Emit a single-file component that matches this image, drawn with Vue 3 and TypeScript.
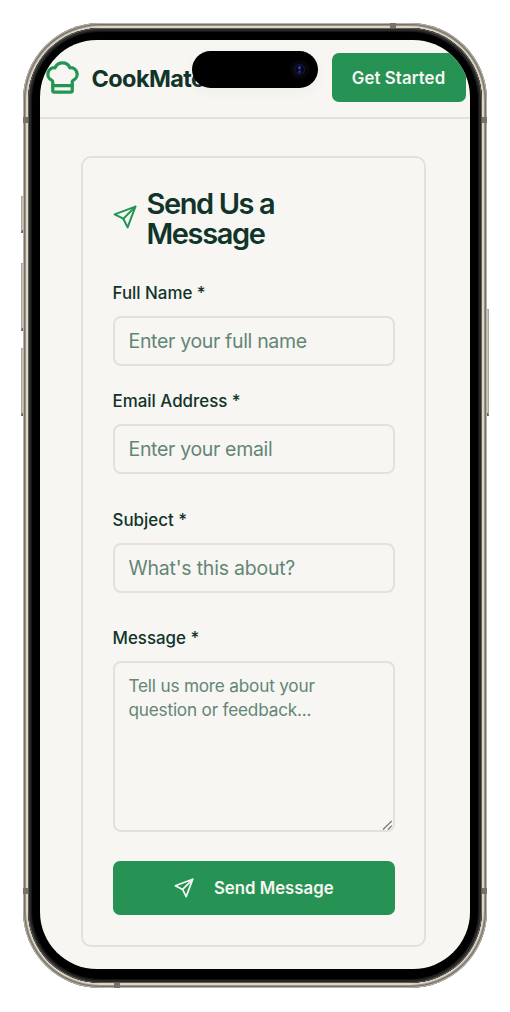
<script setup lang="ts">
import { ref } from 'vue'

interface Field {
  id: string
  label: string
  placeholder: string
  type: string
}

const fields: Field[] = [
  { id: 'name', label: 'Full Name *', placeholder: 'Enter your full name', type: 'text' },
  { id: 'email', label: 'Email Address *', placeholder: 'Enter your email', type: 'email' },
  { id: 'subject', label: 'Subject *', placeholder: "What's this about?", type: 'text' },
]

const values = ref<Record<string, string>>({ name: '', email: '', subject: '' })
const message = ref('')
</script>

<template>
  <main class="stage">
    <div class="phone">
      <i class="side-key action"></i>
      <i class="side-key volume-up"></i>
      <i class="side-key volume-down"></i>
      <i class="side-key power"></i>
      <div class="frame">
        <i class="band left top"></i>
        <i class="band right top"></i>
        <i class="band left bottom"></i>
        <i class="band right bottom"></i>
        <i class="band cap-top"></i>
        <i class="band cap-bottom"></i>
        <div class="bezel">
          <div class="screen">
            <header class="navbar">
              <svg class="logo" viewBox="0 0 24 24">
                <path d="M17 21a1 1 0 0 0 1-1v-5.35c0-.457.316-.844.727-1.041a4 4 0 0 0-2.134-7.589 5 5 0 0 0-9.186 0 4 4 0 0 0-2.134 7.588c.411.198.727.585.727 1.041V20a1 1 0 0 0 1 1Z" />
                <path d="M6 17h12" />
              </svg>
              <span class="brand">CookMate</span>
              <button class="cta" type="button">Get Started</button>
            </header>
            <form class="card" @submit.prevent>
              <h1 class="title">
                <svg class="plane" viewBox="0 0 24 24">
                  <path d="M22.4 1.6 14.6 22.4 10.3 13.7 1.6 9.4Z" />
                  <path d="M22.4 1.6 10.3 13.7" />
                </svg>
                <span>Send Us a<br />Message</span>
              </h1>
              <div v-for="field in fields" :key="field.id" class="field" :class="field.id">
                <label :for="field.id">{{ field.label }}</label>
                <input :id="field.id" v-model="values[field.id]" :type="field.type" :placeholder="field.placeholder" />
              </div>
              <div class="field message">
                <label for="message">Message *</label>
                <div class="area">
                  <textarea id="message" v-model="message" placeholder="Tell us more about your question or feedback..."></textarea>
                  <svg class="grip" viewBox="0 0 12 12"><path d="M1 10.5 9.8 2M6 10.5l3.8-3.8" /></svg>
                </div>
              </div>
              <button class="submit" type="submit">
                <svg class="plane" viewBox="0 0 24 24">
                  <path d="M22.4 1.6 14.6 22.4 10.3 13.7 1.6 9.4Z" />
                  <path d="M22.4 1.6 10.3 13.7" />
                </svg>
                <span>Send Message</span>
              </button>
            </form>
          </div>
        </div>
      </div>
      <div class="island"><i class="lens"></i></div>
    </div>
  </main>
</template>

<style>
html,
body {
  background: #fff;
}
</style>

<style scoped>
* {
  box-sizing: border-box;
}
.stage {
  width: 510px;
  height: 1012px;
  padding: 23px 23px 0;
  overflow: hidden;
  font-family: Inter, "Liberation Sans", sans-serif;
  color: #10342a;
}
.phone {
  position: relative;
  width: 464px;
  height: 965px;
}
.frame {
  position: relative;
  height: 100%;
  padding: 5px;
  border-radius: 77px;
  background: #ddd5c7;
  box-shadow: inset 0 0 0 1px #b5b1a9, inset 0 0 0 2px #777268, inset 0 0 0 3px #999388;
}
.bezel {
  position: relative;
  height: 100%;
  padding: 12px;
  border-radius: 72px;
  background: #000;
  box-shadow: inset 0 0 0 1px #625e56, inset 0 0 0 3px #282828, inset 0 0 0 4px #151515;
}
.screen {
  height: 929px;
  width: 430px;
  overflow: hidden;
  border-radius: 57px;
  background: #f7f6f2;
}
.band {
  position: absolute;
  width: 6px;
  height: 6px;
  background: #777167;
}
.band.left { left: 0; }
.band.right { right: 0; }
.band.top { top: 94px; }
.band.bottom { bottom: 94px; }
.cap-top { top: 0; right: 91px; }
.cap-bottom { bottom: 0; left: 91px; }
.side-key {
  position: absolute;
  width: 4px;
  border: 1px solid #aaa69c;
  border-bottom: 3px solid #68645c;
  background: #cbc6b8;
}
.action { left: -2px; top: 173px; height: 37px; }
.volume-up { left: -2px; top: 240px; height: 68px; }
.volume-down { left: -2px; top: 325px; height: 68px; }
.power { right: -2px; top: 286px; height: 107px; }

.island {
  position: absolute;
  left: 169px;
  top: 28px;
  width: 126px;
  height: 37px;
  border-radius: 19px;
  background: #000;
  box-shadow: 0 4px 14px rgba(25, 60, 45, 0.04);
}
.lens {
  position: absolute;
  right: 13px;
  top: 13px;
  width: 11px;
  height: 11px;
  border-radius: 50%;
  border: 1px solid #1b1b50;
  background: radial-gradient(circle at 50% 30%, #3840a0 0 1px, transparent 2px),
    radial-gradient(circle at 50% 75%, #252b78 0 1px, #08081d 2px);
  box-shadow: 0 0 0 4px #08060a;
}

.navbar {
  display: flex;
  align-items: center;
  height: 78.5px;
  padding: 0 4.5px 2px 2.5px;
  border-bottom: 2px solid #e5e0d8;
}
.logo {
  width: 39px;
  height: 39px;
  fill: none;
  stroke: #239552;
  stroke-width: 2;
  stroke-linecap: round;
  stroke-linejoin: round;
}
.brand {
  margin: 2px 0 0 10px;
  font-size: 23.5px;
  font-weight: 700;
  letter-spacing: -0.6px;
}
.cta {
  width: 134px;
  height: 49px;
  margin-left: auto;
  padding: 1px 0 0;
  border: 0;
  border-radius: 7px;
  background: #269355;
  color: #f7f6f2;
  font: 600 16.8px Inter, "Liberation Sans", sans-serif;
  letter-spacing: 0.1px;
}

.card {
  display: flex;
  flex-direction: column;
  width: 345px;
  height: 791px;
  margin: 37.5px 0 0 41px;
  padding: 31px 29.5px 0;
  border: 2px solid #e5e1d8;
  border-radius: 10px;
}
.title {
  display: flex;
  align-items: center;
  gap: 10px;
  height: 60px;
  margin: 0;
  font-size: 29px;
  line-height: 30px;
  font-weight: 600;
  letter-spacing: -1.4px;
}
.plane {
  flex: none;
  width: 24px;
  height: 24px;
  fill: none;
  stroke: #239552;
  stroke-width: 2;
  stroke-linecap: round;
  stroke-linejoin: round;
}
.title .plane {
  margin-top: -4px;
}
.field {
  display: flex;
  flex-direction: column;
}
.field label {
  height: 20px;
  margin-bottom: 13px;
  font-size: 16.9px;
  line-height: 20px;
  font-weight: 550;
}
.name { margin-top: 33.5px; }
.email { margin-top: 25.5px; }
.subject, .field.message { margin-top: 35.5px; }
input,
textarea {
  display: block;
  width: 282.5px;
  margin: 0;
  border: 2px solid #e6e1d8;
  border-radius: 8px;
  outline: none;
  background: transparent;
  color: #10342a;
  font-family: Inter, "Liberation Sans", sans-serif;
}
input {
  height: 50px;
  padding: 0 14px;
  font-size: 19.5px;
  letter-spacing: -0.33px;
}
.subject input {
  letter-spacing: -0.22px;
}
textarea {
  height: 170.5px;
  padding: 10.5px 14px;
  font-size: 17.2px;
  line-height: 24px;
  letter-spacing: -0.2px;
  resize: none;
}
input::placeholder,
textarea::placeholder {
  color: #628676;
  opacity: 1;
}
.area {
  position: relative;
}
.grip {
  position: absolute;
  right: 0.5px;
  bottom: 1px;
  width: 12px;
  height: 12px;
  fill: none;
  stroke: #777;
  stroke-width: 1.2;
}
.submit {
  display: flex;
  align-items: center;
  justify-content: center;
  gap: 20px;
  width: 282.5px;
  height: 54px;
  margin-top: 29px;
  padding: 1px 0 0;
  border: 0;
  border-radius: 7px;
  background: #269355;
  color: #f7f6f2;
  font: 600 16.8px Inter, "Liberation Sans", sans-serif;
}
.submit .plane {
  width: 20px;
  height: 20px;
  stroke: #f7f6f2;
}
</style>
